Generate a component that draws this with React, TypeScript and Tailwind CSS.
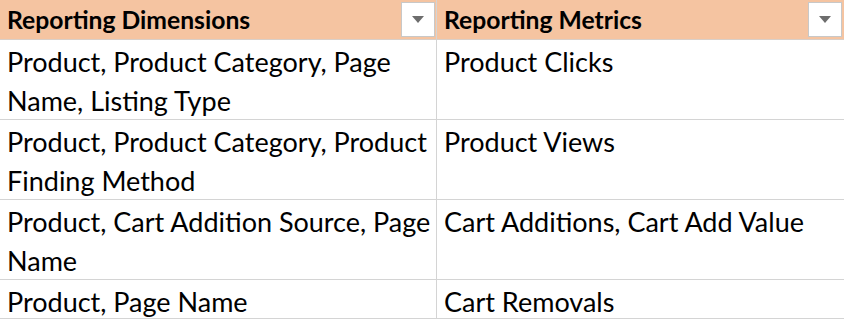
import React from 'react';

const ROWS: { dims: string[]; metrics: string }[] = [
  { dims: ['Product, Product Category, Page', 'Name, Listing Type'], metrics: 'Product Clicks' },
  { dims: ['Product, Product Category, Product', 'Finding Method'], metrics: 'Product Views' },
  { dims: ['Product, Cart Addition Source, Page', 'Name'], metrics: 'Cart Additions, Cart Add Value' },
  { dims: ['Product, Page Name'], metrics: 'Cart Removals' },
];

const FilterButton = () => (
  <div className="w-[34px] h-[35px] bg-white border border-[#c8c8c8] flex items-center justify-center">
    <svg width="12" height="7" viewBox="0 0 12 7">
      <path d="M0 0 L12 0 L6 7 Z" fill="#6d6d6d" />
    </svg>
  </div>
);

export default function App() {
  return (
    <div className="w-[844px] h-[320px] overflow-hidden bg-white text-black font-['Lato',sans-serif]">
      <div className="grid grid-cols-[437px_407px]">
        {/* Header */}
        <div className="h-[40px] bg-[#f5c4a1] border-r border-[#d4d4d4] border-b border-b-[#d9cfc8] flex items-center justify-between pl-[7px] pr-[1px]">
          <span className="font-bold text-[24.7px] leading-[40px] whitespace-nowrap">Reporting Dimensions</span>
          <FilterButton />
        </div>
        <div className="h-[40px] bg-[#f5c4a1] border-b border-b-[#d9cfc8] flex items-center justify-between pl-[7px] pr-[2px]">
          <span className="font-bold text-[24.7px] leading-[40px] whitespace-nowrap">Reporting Metrics</span>
          <FilterButton />
        </div>

        {/* Body */}
        {ROWS.map((row, i) => {
          const h = row.dims.length > 1 ? 'h-[80px]' : 'h-[39px]';
          return (
            <React.Fragment key={i}>
              <div className={`${h} border-r border-b border-[#d4d4d4] pl-[7px] pt-[2px] text-[27px] leading-[39px] whitespace-nowrap`}>
                {row.dims.map((line, j) => (
                  <div key={j}>{line}</div>
                ))}
              </div>
              <div className={`${h} border-b border-[#d4d4d4] pl-[7px] pt-[2px] text-[27px] leading-[39px] whitespace-nowrap`}>
                {row.metrics}
              </div>
            </React.Fragment>
          );
        })}
      </div>
    </div>
  );
}
